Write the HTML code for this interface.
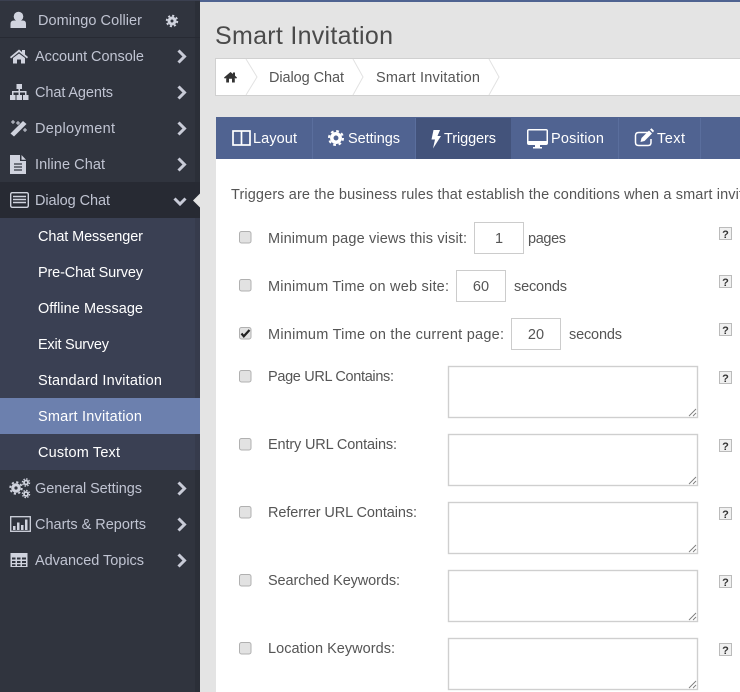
<!DOCTYPE html>
<html><head><meta charset="utf-8"><title>Smart Invitation</title>
<style>
html,body{margin:0;padding:0;width:740px;height:692px;overflow:hidden;background:#e4e4e4}
svg{display:block}
text{font-family:"Liberation Sans",Arial,sans-serif;font-size:14.5px}
.s{fill:#c0c4d2}.w{fill:#fff}.d{fill:#555}
.cb{fill:#e2e2e2;stroke:#b0b0b0;stroke-width:1}
.in{fill:#fff;stroke:#ccc;stroke-width:1}
.ta{fill:#fff;stroke:#cfcfcf;stroke-width:1.4}
.hb{fill:#f0f0f0;stroke:#bbb;stroke-width:1}
.q{font-size:11px;font-weight:bold;fill:#333;text-anchor:middle}
.chev{fill:none;stroke:#c8cbd7;stroke-width:3}
.gr{fill:none;stroke:#7d7d7d;stroke-width:.9}
</style></head>
<body>
<svg width="740" height="692" viewBox="0 0 740 692" xmlns="http://www.w3.org/2000/svg">
<rect width="740" height="692" fill="#e4e4e4"/>
<rect x="200" y="0" width="540" height="2" fill="#4f6391"/>
<!-- sidebar -->
<rect width="200" height="692" fill="#30343e"/>
<rect x="195" width="5" height="692" fill="#2b2f38"/>
<rect y="0" width="200" height="1" fill="#3b4050"/>
<rect y="37" width="200" height="1" fill="#272a33"/>
<rect y="182" width="200" height="36" fill="#272a33"/>
<rect y="218" width="200" height="252" fill="#3a4053"/>
<rect x="195" y="218" width="5" height="252" fill="#363b4c"/>
<rect y="398" width="200" height="36" fill="#6c80ae"/>
<path d="M200 193.500L193 200.500L200 207.500Z" fill="#e4e4e4"/>
<!-- user -->
<circle cx="18.500" cy="16.500" r="4.800" fill="#d0d3de"/><path d="M10.500 28V24Q10.500 20.500 14 20.500H23Q26 20.500 26 24V28Z" fill="#d0d3de"/>
<text x="38" y="25" class="s" textLength="104" lengthAdjust="spacing">Domingo Collier</text>
<circle cx="172" cy="21" r="3" fill="none" stroke="#d0d3de" stroke-width="3"/><circle cx="172" cy="21" r="5.300" fill="none" stroke="#d0d3de" stroke-width="1.800" stroke-dasharray="2.100 2.060"/>
<!-- main menu -->
<g>
<text x="35" y="61" class="s" textLength="109">Account Console</text>
<text x="35" y="97" class="s" textLength="78">Chat Agents</text>
<text x="35" y="133" class="s" textLength="80">Deployment</text>
<text x="35" y="169" class="s" textLength="70">Inline Chat</text>
<text x="35" y="205" class="s" textLength="75">Dialog Chat</text>
<text x="35" y="493" class="s" textLength="107">General Settings</text>
<text x="35" y="529" class="s" textLength="111">Charts &amp; Reports</text>
<text x="35" y="565" class="s" textLength="109">Advanced Topics</text>
</g>
<g>
<text x="38" y="241" class="w" textLength="105">Chat Messenger</text>
<text x="38" y="277" class="w" textLength="105">Pre-Chat Survey</text>
<text x="38" y="313" class="w" textLength="105">Offline Message</text>
<text x="38" y="349" class="w" textLength="71">Exit Survey</text>
<text x="38" y="385" class="w" textLength="124">Standard Invitation</text>
<text x="38" y="421" class="w" textLength="104">Smart Invitation</text>
<text x="38" y="457" class="w" textLength="82">Custom Text</text>
</g>
<!-- chevrons -->
<path class="chev" d="M178.500 50.500L184.500 56.500L178.500 62.500M178.500 86.500L184.500 92.500L178.500 98.500M178.500 122.500L184.500 128.500L178.500 134.500M178.500 158.500L184.500 164.500L178.500 170.500M178.500 482.500L184.500 488.500L178.500 494.500M178.500 518.500L184.500 524.500L178.500 530.500M178.500 554.500L184.500 560.500L178.500 566.500M174.500 198.500L180 204L185.500 198.500"/>
<!-- home -->
<path d="M10 57L19 49.500L22 52V50H25V54.500L28 57L27 58.500L19 52L11 58.500Z M13 58L19 53.500L25 58V63.500H21V59.500H17V63.500H13Z" fill="#d0d3de"/>
<!-- sitemap -->
<path d="M16.500 84H22V89H20V91H26.500V95H28.500V100H23V95H25V92.500H20V95H22V100H16.500V95H18.500V92.500H13.500V95H15.500V100H10V95H12V91H18.500V89H16.500Z" fill="#d0d3de"/>
<!-- magic -->
<path d="M10.500 133.500L23 121L26.500 124L14 136.500Z" fill="#d0d3de"/><path d="M18 121V125M16 123H20M13 120V124M11 122H15M25 128V132M23 130H27" stroke="#d0d3de" stroke-width="1" fill="none"/>
<!-- file -->
<path d="M10 155H20V161H26V174H10Z" fill="#d0d3de"/><path d="M21.500 155L26 159.700H21.500Z" fill="#d0d3de"/><path d="M14 164H22M14 167H22M14 170H22" stroke="#30343e" stroke-width="1.200"/>
<!-- list alt -->
<rect x="10.700" y="192.700" width="17.600" height="14.600" rx="1.500" fill="none" stroke="#d0d3de" stroke-width="1.400"/><path d="M13 196.500H26M13 199.500H26M13 202.500H26" stroke="#d0d3de" stroke-width="1.600"/>
<!-- cogs -->
<circle cx="16" cy="488" r="3.200" fill="none" stroke="#d0d3de" stroke-width="3.200"/><circle cx="16" cy="488" r="5.800" fill="none" stroke="#d0d3de" stroke-width="1.800" stroke-dasharray="2.200 2.355"/>
<circle cx="26" cy="482.500" r="2" fill="none" stroke="#d0d3de" stroke-width="1.800"/><circle cx="26" cy="482.500" r="3.600" fill="none" stroke="#d0d3de" stroke-width="1.300" stroke-dasharray="1.500 1.330"/>
<circle cx="26" cy="494" r="2" fill="none" stroke="#d0d3de" stroke-width="1.800"/><circle cx="26" cy="494" r="3.600" fill="none" stroke="#d0d3de" stroke-width="1.300" stroke-dasharray="1.500 1.330"/>
<!-- chart -->
<rect x="10.700" y="516.700" width="19.600" height="14.600" fill="none" stroke="#d0d3de" stroke-width="1.300"/><path d="M13 526H15.500V530H13ZM17 522.500H19.500V530H17ZM21 525H23.500V530H21ZM25 519.500H27.500V530H25Z" fill="#d0d3de"/>
<!-- table -->
<rect x="10.500" y="553" width="17" height="14" fill="#d0d3de"/><path d="M12 557.500H15.500V559.500H12ZM17 557.500H20.500V559.500H17ZM22 557.500H26V559.500H22ZM12 561H15.500V563H12ZM17 561H20.500V563H17ZM22 561H26V563H22ZM12 564.300H15.500V566H12ZM17 564.300H20.500V566H17ZM22 564.300H26V566H22Z" fill="#30343e"/>
<!-- title -->
<text x="215" y="44" style="font-size:25px" fill="#4a4a4a" textLength="178">Smart Invitation</text>
<!-- breadcrumb -->
<rect x="215.500" y="58.500" width="530" height="37" fill="#fff" stroke="#d0d0d0"/>
<path d="M246 59L257 77L246 95M353 59L363 77L353 95M489 59L499 77L489 95" fill="none" stroke="#e2e2e2"/>
<path d="M224 77.500L230.500 72L233 74V72.500H235V75.700L237 77.500L236 78.700L234.800 77.700V82.500H232V78.800H229V82.500H226.200V77.700L225 78.700Z" fill="#333"/>
<text x="269" y="82" class="d" textLength="75">Dialog Chat</text>
<text x="376" y="82" class="d" textLength="104">Smart Invitation</text>
<!-- tabs -->
<rect x="216" y="117" width="524" height="42" fill="#506391"/>
<rect x="416" y="118" width="95" height="41" fill="#43537b"/>
<path d="M312.500 118V159M415.500 118V159M618.500 118V159M700.500 118V159" stroke="#5a6e9d"/>
<rect x="233" y="131" width="17" height="14" fill="none" stroke="#fff" stroke-width="1.700"/><path d="M241.500 131V145" stroke="#fff" stroke-width="1.700"/>
<text x="253" y="143" class="w" textLength="44">Layout</text>
<circle cx="336" cy="138" r="4.200" fill="none" stroke="#fff" stroke-width="3.500"/><circle cx="336" cy="138" r="7" fill="none" stroke="#fff" stroke-width="2" stroke-dasharray="2.750 2.748"/>
<text x="348" y="143" class="w" textLength="52">Settings</text>
<path d="M433.500 130H440L437.500 136H441L433 148.500L435 139.500H431.500Z" fill="#fff"/>
<text x="444" y="143" class="w" textLength="52">Triggers</text>
<path d="M529 129H546Q548 129 548 131V143Q548 145 546 145H540V147H542V148.500H533V147H535V145H529Q527 145 527 143V131Q527 129 529 129ZM528.500 130.500V141H546.500V130.500Z" fill="#fff" fill-rule="evenodd"/>
<text x="551" y="143" class="w" textLength="53">Position</text>
<path d="M650 132.500H639Q635.500 132.500 635.500 135.500V142.500Q635.500 145.500 639 145.500H648Q651 145.500 651 142.500V139" fill="none" stroke="#fff" stroke-width="1.500"/>
<path d="M640.500 142L641.500 138L649 130.500L652 133.500L644.500 141Z M650 129.500L651.500 128.300L654 130.800L653 132.500Z" fill="#fff"/>
<text x="657" y="143" class="w" textLength="28">Text</text>
<!-- content -->
<rect x="216" y="159" width="524" height="533" fill="#fff"/>
<text x="231" y="199" class="d" textLength="512">Triggers are the business rules that establish the conditions when a smart invit</text>
<!-- checkboxes -->
<rect class="cb" x="239.500" y="231.500" width="11.500" height="11.500" rx="2"/>
<rect class="cb" x="239.500" y="279.500" width="11.500" height="11.500" rx="2"/>
<rect class="cb" x="239.500" y="327.500" width="11.500" height="11.500" rx="2"/>
<path d="M241.500 333.500L243.800 336.300L249.500 330" fill="none" stroke="#222" stroke-width="2.200"/>
<rect class="cb" x="239.500" y="370.500" width="11.500" height="11.500" rx="2"/>
<rect class="cb" x="239.500" y="438.500" width="11.500" height="11.500" rx="2"/>
<rect class="cb" x="239.500" y="506.500" width="11.500" height="11.500" rx="2"/>
<rect class="cb" x="239.500" y="574.500" width="11.500" height="11.500" rx="2"/>
<rect class="cb" x="239.500" y="642.500" width="11.500" height="11.500" rx="2"/>
<!-- labels -->
<text x="268" y="243" class="d" textLength="199">Minimum page views this visit:</text>
<text x="528" y="243" class="d" textLength="38">pages</text>
<text x="268" y="291" class="d" textLength="181">Minimum Time on web site:</text>
<text x="514" y="291" class="d" textLength="53">seconds</text>
<text x="268" y="339" class="d" textLength="236">Minimum Time on the current page:</text>
<text x="569" y="339" class="d" textLength="53">seconds</text>
<text x="268" y="381" class="d" textLength="126">Page URL Contains:</text>
<text x="268" y="449" class="d" textLength="129">Entry URL Contains:</text>
<text x="268" y="517" class="d" textLength="149">Referrer URL Contains:</text>
<text x="268" y="585" class="d" textLength="132">Searched Keywords:</text>
<text x="268" y="653" class="d" textLength="127">Location Keywords:</text>
<!-- inputs -->
<rect class="in" x="474.500" y="222.500" width="49" height="31"/>
<text x="499" y="243" class="d" text-anchor="middle">1</text>
<rect class="in" x="456.500" y="270.500" width="49" height="31"/>
<text x="481" y="291" class="d" text-anchor="middle">60</text>
<rect class="in" x="511.500" y="318.500" width="49" height="31"/>
<text x="536" y="339" class="d" text-anchor="middle">20</text>
<!-- textareas -->
<rect class="ta" x="448.500" y="366.500" width="249" height="51"/>
<rect class="ta" x="448.500" y="434.500" width="249" height="51"/>
<rect class="ta" x="448.500" y="502.500" width="249" height="51"/>
<rect class="ta" x="448.500" y="570.500" width="249" height="51"/>
<rect class="ta" x="448.500" y="638.500" width="249" height="51"/>
<path class="gr" d="M689 416L696 409M693 416L696 413M689 484L696 477M693 484L696 481M689 552L696 545M693 552L696 549M689 620L696 613M693 620L696 617M689 688L696 681M693 688L696 685"/>
<!-- help -->
<rect class="hb" x="719.500" y="227.500" width="12" height="12"/><text x="725.500" y="238" class="q">?</text>
<rect class="hb" x="719.500" y="275.500" width="12" height="12"/><text x="725.500" y="286" class="q">?</text>
<rect class="hb" x="719.500" y="323.500" width="12" height="12"/><text x="725.500" y="334" class="q">?</text>
<rect class="hb" x="719.500" y="371.500" width="12" height="12"/><text x="725.500" y="382" class="q">?</text>
<rect class="hb" x="719.500" y="439.500" width="12" height="12"/><text x="725.500" y="450" class="q">?</text>
<rect class="hb" x="719.500" y="507.500" width="12" height="12"/><text x="725.500" y="518" class="q">?</text>
<rect class="hb" x="719.500" y="575.500" width="12" height="12"/><text x="725.500" y="586" class="q">?</text>
<rect class="hb" x="719.500" y="643.500" width="12" height="12"/><text x="725.500" y="654" class="q">?</text>
</svg>
</body></html>
